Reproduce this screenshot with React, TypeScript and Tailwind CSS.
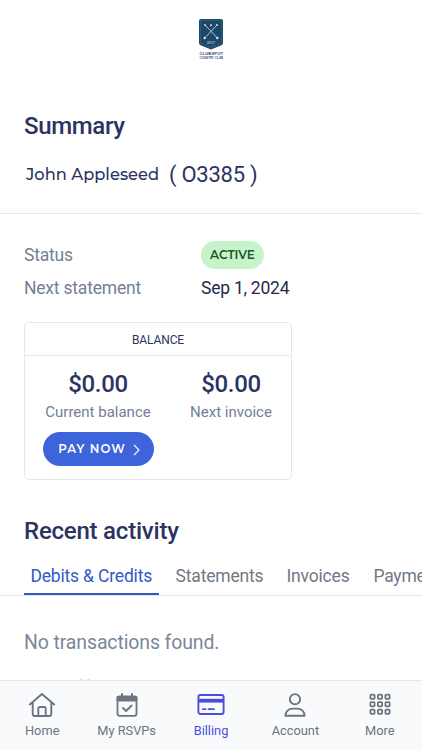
import { ReactNode } from "react";

interface Tab {
  label: string;
  width: string;
  active?: boolean;
}

interface NavItem {
  label: string;
  icon: ReactNode;
  active?: boolean;
}

const Logo = () => (
  <svg width="28" height="44" viewBox="0 0 28 44" className="block font-['Liberation_Sans',sans-serif]">
    <path d="M4 1h20a2 2 0 0 1 2 2v22q0 1.500-1.500 2.200L14 31.500 3.500 27.200Q2 26.500 2 25V3a2 2 0 0 1 2-2z" fill="#1d4768" />
    <path d="M4.500 2.300h19a1.200 1.200 0 0 1 1.200 1.200v21.200L14 29.500 3.300 24.700V3.500a1.200 1.200 0 0 1 1.200-1.200z" fill="none" stroke="#5c7d94" strokeWidth="0.400" />
    <path d="M8 7l12.300 13M20 7L7.700 20" stroke="#c4d1da" strokeWidth="0.900" />
    <g fill="#dfe7ec">
      <circle cx="14" cy="7.200" r="1" />
      <circle cx="8" cy="7" r="0.900" />
      <circle cx="20" cy="7" r="0.900" />
      <circle cx="7.700" cy="20" r="1.200" />
      <circle cx="20.300" cy="20" r="1.200" />
    </g>
    <text x="10" y="26" textLength="8" fontSize="3" fontWeight="700" fill="#c3d1db">2017</text>
    <text x="2.500" y="37" textLength="23.500" fontSize="4" fontWeight="700" fill="#1d4768">CLUBSPOT</text>
    <text x="2.500" y="41" textLength="23.500" fontSize="2.700" fontWeight="700" fill="#1d4768">COUNTRY CLUB</text>
  </svg>
);

const HomeIcon = () => (
  <svg width="28" height="26" viewBox="0 0 28 26" fill="none" stroke="currentColor" strokeWidth="1.900" strokeLinecap="round" strokeLinejoin="round">
    <path d="M1.800 12.500L14 2l12.200 10.500M4.700 10.400v11.300a2.300 2.300 0 0 0 2.300 2.300h14a2.300 2.300 0 0 0 2.300-2.300V10.400" />
    <path d="M10.300 23.800v-7.500a1.300 1.300 0 0 1 1.300-1.300h4.800a1.300 1.300 0 0 1 1.300 1.300v7.500" />
  </svg>
);

const CalendarIcon = () => (
  <svg width="28" height="26" viewBox="0 0 28 26" fill="none" stroke="currentColor" strokeWidth="1.800" strokeLinecap="round" strokeLinejoin="round">
    <rect x="4.500" y="4.300" width="19" height="19.500" rx="2" />
    <path d="M4.500 5h19v3.600h-19z" fill="currentColor" />
    <path d="M9 2v3M19 2v3" strokeWidth="2" />
    <path d="M10 16l3.100 3 5.500-5.500" strokeWidth="1.900" />
  </svg>
);

const CardIcon = () => (
  <svg width="28" height="26" viewBox="0 0 28 26" fill="none" stroke="currentColor" strokeWidth="1.900" strokeLinecap="round">
    <rect x="1.400" y="3" width="25.200" height="19" rx="2" />
    <path d="M2 8.700h24" strokeWidth="3.800" strokeLinecap="butt" />
    <path d="M6 17.200h2.500M11.500 17.200H17" strokeWidth="1.800" />
  </svg>
);

const AccountIcon = () => (
  <svg width="28" height="26" viewBox="0 0 28 26" fill="none" stroke="currentColor" strokeWidth="1.900" strokeLinejoin="round">
    <circle cx="14" cy="7.200" r="5.100" />
    <path d="M4.400 23.800c0-4.200 3.200-7.200 7.200-7.200h4.800c4 0 7.200 3 7.200 7.200z" />
  </svg>
);

const GridIcon = () => (
  <svg width="28" height="26" viewBox="0 0 28 26" fill="none" stroke="currentColor" strokeWidth="1.800">
    {[4.4, 11.9, 19.4].map((x) =>
      [2.6, 10.1, 17.6].map((y) => (
        <rect key={`${x}-${y}`} x={x} y={y} width="4.200" height="4.200" rx="1" />
      ))
    )}
  </svg>
);

const tabs: Tab[] = [
  { label: "Debits & Credits", width: "w-[134.500px]", active: true },
  { label: "Statements", width: "w-[100px]" },
  { label: "Invoices", width: "w-[75px]" },
  { label: "Payments", width: "w-[90px]" },
];

const navItems: NavItem[] = [
  { label: "Home", icon: <HomeIcon /> },
  { label: "My RSVPs", icon: <CalendarIcon /> },
  { label: "Billing", icon: <CardIcon />, active: true },
  { label: "Account", icon: <AccountIcon /> },
  { label: "More", icon: <GridIcon /> },
];

const App = () => {
  return (
    <div className="flex h-[750px] w-[422px] flex-col overflow-hidden bg-white font-['Roboto',sans-serif] text-[#2b3460]">
      <main className="min-h-0 flex-1 overflow-hidden">
        <header className="flex h-[108px] justify-center pt-[18px]">
          <Logo />
        </header>

        {/* Member summary */}
        <section className="h-[106px] border-b border-[#e6e8f0] px-6">
          <h1 className="text-2xl leading-9 font-medium tracking-[-0.350px]">Summary</h1>
          <div className="mt-3 flex h-9 items-center pl-0.5">
            <span className="w-[143px] pt-px font-['Montserrat','Inter',sans-serif] text-[16.300px] font-medium whitespace-nowrap">John Appleseed</span>
            <span className="text-[22px] tracking-[-0.250px] whitespace-nowrap">( O3385 )</span>
          </div>
        </section>

        <section className="px-6 pt-[26px]">
          <div className="flex h-[30px] items-center">
            <span className="w-[177px] text-[17.500px] tracking-[-0.200px] text-[#748093]">Status</span>
            <span className="flex h-7 w-[63px] items-center justify-center rounded-full bg-[#c6f3ca] font-['Montserrat','Inter',sans-serif] text-[12px] font-semibold text-[#185726]">
              ACTIVE
            </span>
          </div>
          <div className="mt-[3px] flex h-[30px] items-center">
            <span className="w-[177px] text-[17.500px] tracking-[-0.200px] text-[#748093]">Next statement</span>
            <span className="text-[17.500px] tracking-[-0.230px] text-[#242b4a]">Sep 1, 2024</span>
          </div>

          {/* Balance card */}
          <div className="mt-[19px] h-[158px] w-[268px] rounded-[5px] border border-[#e3e8ef]">
            <div className="flex h-[33px] items-center justify-center border-b border-[#e3e8ef] pt-0.5 text-xs tracking-[-0.100px]">BALANCE</div>
            <div className="flex pt-3">
              <div className="flex w-[146px] flex-col items-center">
                <span className="text-2xl leading-8 font-medium tracking-[-0.300px]">$0.00</span>
                <span className="text-[15px] leading-6 text-[#748093]">Current balance</span>
                <button className="mt-2 flex h-[34px] w-[111px] items-center justify-center gap-[7px] rounded-full bg-[#3e64dc] pt-px pl-0.5 font-['Montserrat','Inter',sans-serif] text-[11.800px] font-semibold tracking-[1.100px] text-white">
                  PAY NOW
                  <svg width="7" height="12" viewBox="0 0 7 12" fill="none" stroke="currentColor" strokeWidth="1.100">
                    <path d="M1 1l5 5-5 5" />
                  </svg>
                </button>
              </div>
              <div className="flex w-[120px] flex-col items-center">
                <span className="text-2xl leading-8 font-medium tracking-[-0.300px]">$0.00</span>
                <span className="text-[15px] leading-6 text-[#748093]">Next invoice</span>
              </div>
            </div>
          </div>
        </section>

        {/* Activity */}
        <section className="pt-[33px]">
          <h2 className="px-6 text-2xl leading-9 font-medium tracking-[-0.220px]">Recent activity</h2>
          <div className="mt-2.5 flex h-[37px] gap-[11px] overflow-hidden border-b border-[#e3e8ef] pl-6">
            {tabs.map((tab) => (
              <div
                key={tab.label}
                className={`${tab.width} flex h-9 shrink-0 justify-center text-[17.500px] leading-[34px] tracking-[-0.180px] ${
                  tab.active ? "border-b-2 border-[#3557bd] text-[#3459c8]" : "text-[#717985]"
                }`}
              >
                {tab.label}
              </div>
            ))}
          </div>
          <p className="px-6 pt-[29px] text-[19.500px] leading-9 tracking-[-0.130px] text-[#7b8798]">No transactions found.</p>
          <p className="pt-[15px] pl-[76px] text-xl leading-6 text-[#bcc3cd]">ff</p>
        </section>
      </main>

      <nav className="flex h-[70px] shrink-0 border-t border-[#e5e8eb] bg-[#f9fafb] pt-[11px]">
        {navItems.map((item) => (
          <div
            key={item.label}
            className={`flex flex-1 flex-col items-center text-[12.800px] ${item.active ? "text-[#4b4de0]" : "text-[#6b7480]"}`}
          >
            {item.icon}
            <span className="mt-[3px] leading-5">{item.label}</span>
          </div>
        ))}
      </nav>
    </div>
  );
};

export default App;
